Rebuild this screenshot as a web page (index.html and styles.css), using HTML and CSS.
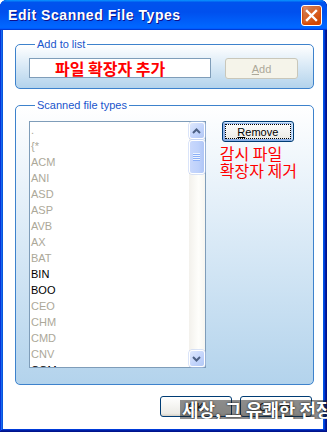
FILE: index.html
```html
<!DOCTYPE html>
<html lang="en">
<head>
<meta charset="utf-8">
<title>Edit Scanned File Types</title>
<link rel="stylesheet" href="styles.css">
</head>
<body>
<div class="window">
  <div class="titlebar">
    <span class="title">Edit Scanned File Types</span>
    <button class="close" aria-label="Close">
      <svg width="13" height="13" viewBox="0 0 13 13"><path d="M2 2 L11 11 M11 2 L2 11" stroke="#fff" stroke-width="2.4" stroke-linecap="square" fill="none"/></svg>
    </button>
  </div>
  <div class="client">
    <fieldset class="group g-add">
      <legend>Add to list</legend>
      <div class="row">
        <div class="textbox">파일 확장자 추가</div>
        <button class="btn btn-add" disabled><u>A</u>dd</button>
      </div>
    </fieldset>
    <fieldset class="group g-scan">
      <legend>Scanned file types</legend>
      <div class="row">
        <div class="listbox">
          <ul class="items">
            <li class="off">.</li>
            <li class="off">{*</li>
            <li class="off">ACM</li>
            <li class="off">ANI</li>
            <li class="off">ASD</li>
            <li class="off">ASP</li>
            <li class="off">AVB</li>
            <li class="off">AX</li>
            <li class="off">BAT</li>
            <li>BIN</li>
            <li>BOO</li>
            <li class="off">CEO</li>
            <li class="off">CHM</li>
            <li class="off">CMD</li>
            <li class="off">CNV</li>
            <li>COM</li>
          </ul>
          <div class="scrollbar">
            <div class="sb-btn">
              <svg width="9" height="6" viewBox="0 0 9 6"><path d="M1 5 L4.5 1.5 L8 5" stroke="#4d6185" stroke-width="2" fill="none"/></svg>
            </div>
            <div class="sb-track">
              <div class="sb-thumb"><span class="grip"></span></div>
            </div>
            <div class="sb-btn">
              <svg width="9" height="6" viewBox="0 0 9 6"><path d="M1 1 L4.5 4.5 L8 1" stroke="#4d6185" stroke-width="2" fill="none"/></svg>
            </div>
          </div>
        </div>
        <div class="side">
          <button class="btn btn-default"><u>R</u>emove</button>
          <p class="note">감시 파일<br>확장자 제거</p>
        </div>
      </div>
    </fieldset>
    <div class="actions">
      <button class="btn">OK</button>
      <button class="btn">Cancel</button>
    </div>
  </div>
</div>
<div class="watermark">세상, 그 유쾌한 전장</div>
</body>
</html>
```

FILE: styles.css
```css
* { box-sizing: border-box; }
html, body { margin: 0; padding: 0; }
body {
  width: 327px;
  height: 432px;
  position: relative;
  overflow: hidden;
  background: #fff;
  font-family: "Liberation Sans", Arial, sans-serif;
  font-size: 11px;
}

.window {
  width: 327px;
  height: 432px;
  display: flex;
  flex-direction: column;
  background: #0054e3;
  border-radius: 7px 7px 0 0;
  box-shadow: inset -1px -1px #00138c, inset 1px 1px #0831d9, inset -2px -2px #001ea0, inset 2px 2px #166aee, inset -3px -3px #003bda, inset 3px 3px #0855dd;
}

.titlebar {
  height: 30px;
  flex: none;
  display: flex;
  align-items: center;
  justify-content: space-between;
  padding: 0 5px 0 8px;
  border-radius: 7px 7px 0 0;
  background: linear-gradient(180deg, #0997ff, #0053ee 8%, #0050ee 40%, #0066ff 88%, #0066ff 93%, #005bff 95%, #003dd7 96%, #003dd7);
}
.title {
  color: #fff;
  font-family: "Liberation Sans", Arial, sans-serif;
  font-weight: bold;
  font-size: 14px;
  letter-spacing: 0.55px;
  text-shadow: 1px 1px #0f1089;
}
.close {
  width: 21px;
  height: 21px;
  margin: 0;
  padding: 0;
  display: flex;
  align-items: center;
  justify-content: center;
  border: 1px solid #fff;
  border-radius: 3px;
  background: radial-gradient(circle at 85% 90%, #cc4600 0%, #dc6527 55%, #cd7546 70%, #e6a18a 100%);
  box-shadow: inset 0 -1px 2px 1px #da4600;
}

.client {
  flex: 1;
  margin: 0 4px 3px 3px;
  background: #fff;
  padding: 7px 9px 0 12px;
  display: flex;
  flex-direction: column;
}

.group {
  margin: 0;
  min-width: 0;
  border: 1px solid #3d82cc;
  border-radius: 5px;
  background: linear-gradient(180deg, #ffffff 0%, #dcebf7 45%, #b3d3ec 100%);
}
.group legend {
  margin-left: 6px;
  padding: 0 2px;
  font-size: 11px;
  line-height: 14px;
  color: #1955cc;
}
.g-add { padding: 7px 14px 9px 13px; }
.g-scan { margin-top: 9px; padding: 9px 16px 16px 13px; }

.row {
  display: flex;
  align-items: flex-start;
}

.textbox {
  width: 182px;
  height: 20px;
  border: 1px solid #7f9db9;
  background: #fff;
  padding-left: 25px;
  color: #ff0000;
  font-family: "Noto Sans CJK KR", "Noto Sans", sans-serif;
  font-weight: bold;
  font-size: 16px;
  line-height: 18px;
  white-space: nowrap;
}

.btn {
  width: 72px;
  height: 21px;
  margin: 0;
  padding: 0;
  font-family: "Liberation Sans", Arial, sans-serif;
  font-size: 11px;
  color: #000;
  border: 1px solid #003c74;
  border-radius: 3px;
  background: linear-gradient(180deg, #fff, #ecebe6 86%, #d6d0c5);
}
.btn-add {
  width: 73px;
  margin-left: 14px;
  color: #aca899;
  border-color: #c9c7ba;
  background: #f5f4ea;
}
.btn-default {
  margin-left: 3px;
  box-shadow: inset -1px 1px #cee7ff, inset 1px 2px #98b8ea, inset -2px 2px #bcd4f6, inset 1px -1px #89ade4, inset 2px -2px #89ade4;
  outline: 1px dotted #000;
  outline-offset: -4px;
}

.listbox {
  width: 180px;
  height: 247px;
  border: 1px solid #7f9db9;
  background: #fff;
  display: flex;
}
.items {
  flex: 1;
  margin: 0;
  padding: 0 0 0 1px;
  list-style: none;
  overflow: hidden;
  font-size: 11px;
  line-height: 16px;
  color: #000;
}
.items .off { color: #aca899; }

.scrollbar {
  width: 16px;
  flex: none;
  display: flex;
  flex-direction: column;
  background: linear-gradient(90deg, #f3f1ec, #fefefb 60%, #f7f6f1);
}
.sb-btn {
  height: 17px;
  flex: none;
  display: flex;
  align-items: center;
  justify-content: center;
  border: 1px solid #fff;
  border-radius: 3px;
  background: linear-gradient(135deg, #dfe8fd, #c1d3fb 60%, #b3c8f5);
  box-shadow: 0 0 0 0.5px #b6c9f4;
}
.sb-track {
  flex: 1;
  padding-top: 1px;
}
.sb-thumb {
  height: 34px;
  border: 1px solid #fff;
  border-radius: 3px;
  background: linear-gradient(90deg, #c9d8fc, #bed1fb 60%, #b0c6f6);
  box-shadow: 0 0 0 0.5px #b6c9f4;
  display: flex;
  align-items: center;
  justify-content: center;
}
.grip {
  width: 7px;
  height: 8px;
  background: repeating-linear-gradient(180deg, #eef4fe 0 1px, #8cb0f8 1px 2px);
}

.side {
  margin-left: 14px;
  display: flex;
  flex-direction: column;
}
.btn-default { margin-left: 2px; }
.note {
  margin: 3px 0 0 0;
  color: #ff0000;
  font-family: "Noto Sans CJK KR", "Noto Sans", sans-serif;
  font-size: 16px;
  line-height: 17px;
  white-space: nowrap;
}

.actions {
  margin-top: 11px;
  margin-right: 2px;
  display: flex;
  justify-content: flex-end;
  gap: 8px;
}

.watermark {
  position: absolute;
  left: 180px;
  top: 400px;
  width: 147px;
  height: 19px;
  padding-left: 2px;
  background: rgba(30, 30, 30, 0.5);
  color: #fff;
  font-family: "Noto Sans CJK KR", sans-serif;
  font-weight: bold;
  font-size: 18px;
  line-height: 19px;
  white-space: nowrap;
  overflow: hidden;
  text-shadow: 0 0 2px #000;
}
```
